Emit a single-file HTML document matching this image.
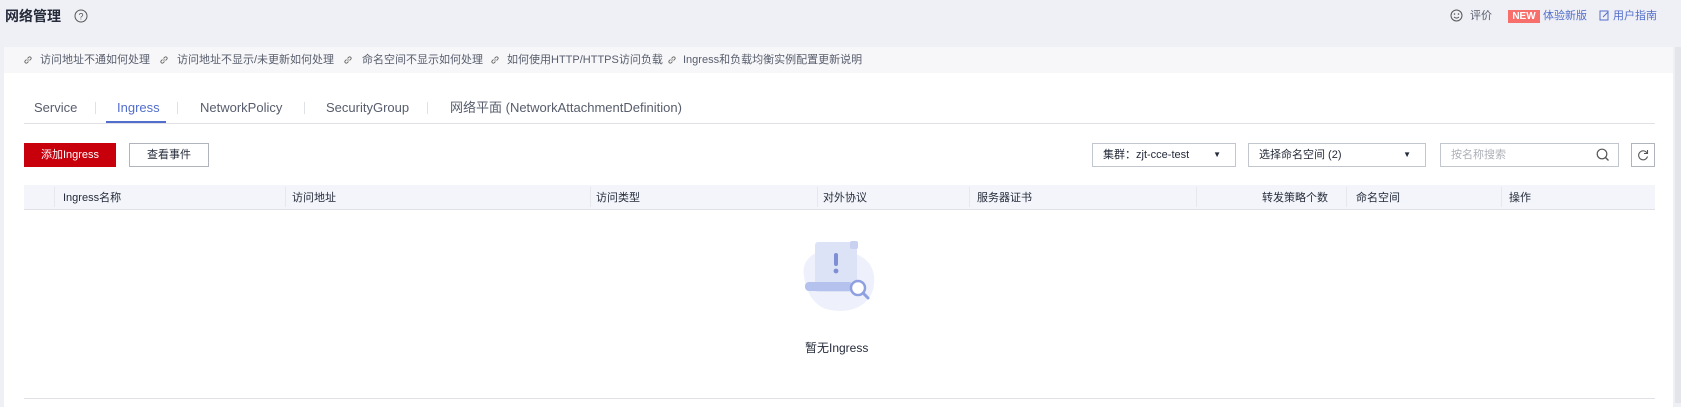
<!DOCTYPE html>
<html><head><meta charset="utf-8"><style>
*{margin:0;padding:0;box-sizing:border-box}
body{width:1681px;height:403px;background:#eff0f5;font-family:"Liberation Sans","Noto Sans CJK SC",sans-serif;font-size:12px;color:#252b3a;position:relative;overflow:hidden}
.a{position:absolute;white-space:nowrap;line-height:16px}
.card{position:absolute;left:4px;top:47px;width:1669px;height:360px;background:#fff}
.bar{position:absolute;left:4px;top:47px;width:1669px;height:26px;background:#f7f7f9}
.lk{color:#575d6c;font-size:11px;top:52px}
.li{position:absolute;top:56px}
.tab{top:100px;font-size:13px;color:#575d6c;line-height:16px}
.sep{top:102px;width:1px;height:12px;background:#dfe1e6}
.sel{position:absolute;top:143px;height:24px;border:1px solid #c2c6ce;background:#fff;font-size:11px;padding:0 10px;line-height:22px;color:#252b3a}
.th{top:190px;font-size:11px;color:#252b3a}
.cd{top:187px;width:1px;height:20px;background:#e6e8ee}
</style></head><body>
<div class="a" style="left:5px;top:8px;font-size:14px;font-weight:bold">网络管理</div>
<svg class="a" style="left:74px;top:9px" width="14" height="14" viewBox="0 0 14 14"><circle cx="7" cy="7" r="6" fill="none" stroke="#555" stroke-width="1"/><text x="7" y="10.5" font-size="9" text-anchor="middle" fill="#555" font-family="Liberation Sans">?</text></svg>
<svg class="a" style="left:1450px;top:9px" width="13" height="13" viewBox="0 0 13 13"><circle cx="6.5" cy="6.5" r="5.5" fill="none" stroke="#555"/><circle cx="4.5" cy="5" r=".8" fill="#555"/><circle cx="8.5" cy="5" r=".8" fill="#555"/><path d="M4 8q2.5 2.2 5 0" fill="none" stroke="#555"/></svg>
<div class="a" style="left:1470px;top:8px;font-size:11px;color:#575d6c">评价</div>
<div class="a" style="left:1508px;top:10px;width:32px;height:13px;background:#f66f6a;color:#fff;font-size:10px;font-weight:bold;text-align:center;line-height:13px">NEW</div>
<div class="a" style="left:1543px;top:8px;font-size:11px;color:#526ecc">体验新版</div>
<svg class="a" style="left:1599px;top:10px" width="11" height="11" viewBox="0 0 11 11"><rect x="1" y="1" width="8" height="9" fill="none" stroke="#526ecc"/><path d="M4 7l5-5" stroke="#526ecc"/></svg>
<div class="a" style="left:1613px;top:8px;font-size:11px;color:#526ecc">用户指南</div>
<div style="position:absolute;left:1675px;top:47px;width:6px;height:356px;background:#e4e5ea"></div>
<div class="card"></div><div class="bar"></div>
<svg class="li" style="left:24px" width="8" height="8" viewBox="0 0 8 8"><path d="M3.5 4.5l1-1M2.5 3.5L1.3 4.7a1.4 1.4 0 0 0 2 2L4.5 5.5M5.5 4.5l1.2-1.2a1.4 1.4 0 0 0-2-2L3.5 2.5" fill="none" stroke="#666" stroke-width=".9"/></svg><div class="a lk" style="left:40px">访问地址不通如何处理</div>
<svg class="li" style="left:160px" width="8" height="8" viewBox="0 0 8 8"><path d="M3.5 4.5l1-1M2.5 3.5L1.3 4.7a1.4 1.4 0 0 0 2 2L4.5 5.5M5.5 4.5l1.2-1.2a1.4 1.4 0 0 0-2-2L3.5 2.5" fill="none" stroke="#666" stroke-width=".9"/></svg><div class="a lk" style="left:177px">访问地址不显示/未更新如何处理</div>
<svg class="li" style="left:344px" width="8" height="8" viewBox="0 0 8 8"><path d="M3.5 4.5l1-1M2.5 3.5L1.3 4.7a1.4 1.4 0 0 0 2 2L4.5 5.5M5.5 4.5l1.2-1.2a1.4 1.4 0 0 0-2-2L3.5 2.5" fill="none" stroke="#666" stroke-width=".9"/></svg><div class="a lk" style="left:362px">命名空间不显示如何处理</div>
<svg class="li" style="left:491px" width="8" height="8" viewBox="0 0 8 8"><path d="M3.5 4.5l1-1M2.5 3.5L1.3 4.7a1.4 1.4 0 0 0 2 2L4.5 5.5M5.5 4.5l1.2-1.2a1.4 1.4 0 0 0-2-2L3.5 2.5" fill="none" stroke="#666" stroke-width=".9"/></svg><div class="a lk" style="left:507px">如何使用HTTP/HTTPS访问负载</div>
<svg class="li" style="left:668px" width="8" height="8" viewBox="0 0 8 8"><path d="M3.5 4.5l1-1M2.5 3.5L1.3 4.7a1.4 1.4 0 0 0 2 2L4.5 5.5M5.5 4.5l1.2-1.2a1.4 1.4 0 0 0-2-2L3.5 2.5" fill="none" stroke="#666" stroke-width=".9"/></svg><div class="a lk" style="left:683px">Ingress和负载均衡实例配置更新说明</div>
<div class="a tab" style="left:34px">Service</div>
<div class="a tab" style="left:117px;color:#526ecc">Ingress</div>
<div class="a tab" style="left:200px">NetworkPolicy</div>
<div class="a tab" style="left:326px">SecurityGroup</div>
<div class="a tab" style="left:450px">网络平面 (NetworkAttachmentDefinition)</div>
<div class="a sep" style="left:95px"></div><div class="a sep" style="left:177px"></div><div class="a sep" style="left:304px"></div><div class="a sep" style="left:427px"></div>
<div class="a" style="left:24px;top:123px;width:1631px;height:1px;background:#dfe1e6"></div>
<div class="a" style="left:106px;top:121px;width:60px;height:2px;background:#526ecc"></div>
<div class="a" style="left:24px;top:143px;width:92px;height:24px;background:#c7000b;color:#fff;font-size:11px;text-align:center;line-height:24px">添加Ingress</div>
<div class="a" style="left:129px;top:143px;width:80px;height:24px;border:1px solid #b0b4bc;font-size:11px;text-align:center;line-height:22px">查看事件</div>
<div class="sel" style="left:1092px;width:144px">集群：zjt-cce-test<span style="position:absolute;right:14px;font-size:8px;top:0">▼</span></div>
<div class="sel" style="left:1248px;width:178px">选择命名空间 (2)<span style="position:absolute;right:14px;font-size:8px;top:0">▼</span></div>
<div class="sel" style="left:1440px;width:179px;color:#adb0b8">按名称搜索
<svg style="position:absolute;right:8px;top:4px" width="14" height="14" viewBox="0 0 14 14"><circle cx="6" cy="6" r="4.8" fill="none" stroke="#555" stroke-width="1.2"/><path d="M9.5 9.5l3 3" stroke="#555" stroke-width="1.3"/></svg></div>
<div class="a" style="left:1631px;top:143px;width:24px;height:24px;border:1px solid #b0b4bc"><svg style="position:absolute;left:5px;top:5px" width="12" height="12" viewBox="0 0 12 12"><path d="M10 4A4.5 4.5 0 1 0 10.5 7.5" fill="none" stroke="#555" stroke-width="1.1"/><path d="M10.5 1v3.5H7" fill="none" stroke="#555" stroke-width="1.1"/></svg></div>
<div class="a" style="left:24px;top:185px;width:1631px;height:25px;background:#f3f5fa;border-bottom:1px solid #dfe1e6"></div>
<div class="a cd" style="left:54px"></div><div class="a cd" style="left:285px"></div><div class="a cd" style="left:590px"></div><div class="a cd" style="left:817px"></div><div class="a cd" style="left:969px"></div><div class="a cd" style="left:1196px"></div><div class="a cd" style="left:1346px"></div><div class="a cd" style="left:1501px"></div>
<div class="a th" style="left:63px">Ingress名称</div>
<div class="a th" style="left:292px">访问地址</div>
<div class="a th" style="left:596px">访问类型</div>
<div class="a th" style="left:823px">对外协议</div>
<div class="a th" style="left:977px">服务器证书</div>
<div class="a th" style="left:1262px">转发策略个数</div>
<div class="a th" style="left:1356px">命名空间</div>
<div class="a th" style="left:1509px">操作</div>
<svg class="a" style="left:792px;top:236px" width="90" height="80" viewBox="0 0 90 80">
<path d="M12 40c-4-20 18-30 38-26 22 4 34 14 32 34-2 22-24 30-44 26-16-3-24-18-26-34z" fill="#eef1fb"/>
<rect x="23" y="6" width="42" height="50" rx="3" fill="#dde3f7"/>
<rect x="58" y="5" width="8" height="8" rx="2" fill="#c8d1f0"/>
<rect x="42" y="17" width="4" height="13" rx="2" fill="#7e8fd6"/><circle cx="44" cy="35" r="2.4" fill="#7e8fd6"/>
<rect x="13" y="46" width="48" height="9" rx="4" fill="#b6c2ee"/>
<circle cx="66" cy="52" r="7" fill="#fff" stroke="#8fa0e0" stroke-width="2.5"/><path d="M71 57l5 5" stroke="#8fa0e0" stroke-width="3" stroke-linecap="round"/>
</svg>
<div class="a" style="left:805px;top:340px;font-size:12px;color:#252b3a">暂无Ingress</div>
<div class="a" style="left:24px;top:398px;width:1631px;height:1px;background:#dfe1e6"></div>
</body></html>
